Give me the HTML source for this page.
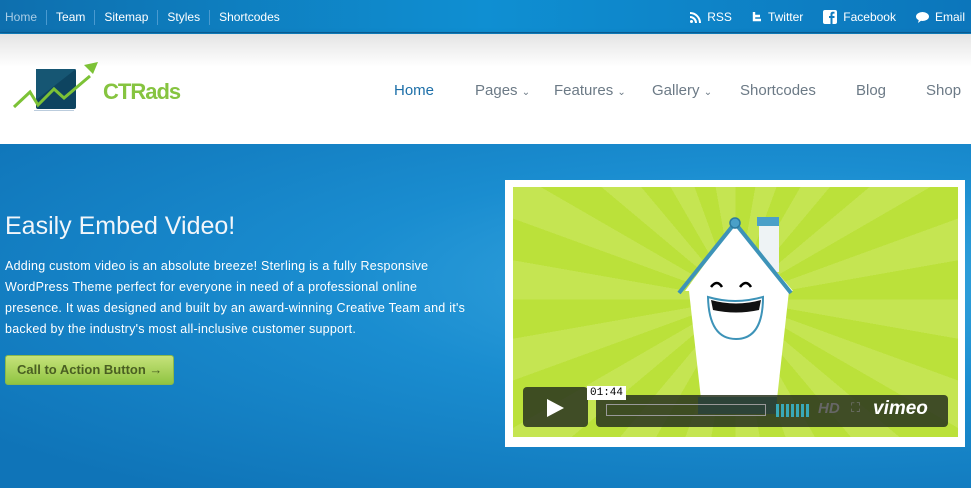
<!DOCTYPE html>
<html><head><meta charset="utf-8"><style>
*{margin:0;padding:0;box-sizing:border-box}
body{width:971px;height:488px;overflow:hidden;font-family:"Liberation Sans","DejaVu Sans",sans-serif;position:relative;background:#1185c7}
.top{position:absolute;left:0;top:0;width:971px;height:33px;background:linear-gradient(90deg,#0e6fae,#0f8fd2 50%,#0c76bb);border-bottom:1px solid #0a5f98}
.top .l{position:absolute;left:0;top:10px;font-size:12px;color:#fff;display:flex}
.top .l span{padding:0 9px;border-left:1px solid #4a9ad0;line-height:15px}
.top .l span:first-child{border:none;padding-left:5px;color:#a9cde6}
.top .r{position:absolute;right:6px;top:10px;font-size:12px;color:#fff;display:flex;gap:0}
.top .r span{margin-left:20px;display:flex;align-items:center;gap:6px}
.hdr{position:absolute;left:0;top:34px;width:971px;height:110px;background:linear-gradient(#e4e4e4,#fff 30%,#fff);box-shadow:0 2px 6px rgba(0,0,0,.4)}
.nav{position:absolute;top:82px;font-size:15px;color:#6c7a86}
.hero{position:absolute;left:0;top:144px;width:971px;height:344px;background:radial-gradient(ellipse at 80% 40%,#3aa8e0,#1a8dd0 40%,#0f74b8 90%)}
h1{position:absolute;left:5px;top:212px;font-weight:normal;font-size:25px;color:#f2f6fa}
.p{position:absolute;left:5px;top:256px;width:462px;font-size:12.5px;line-height:21px;color:#fff;letter-spacing:0.25px}
.btn{position:absolute;left:5px;top:355px;width:169px;height:30px;border-radius:3px;background:linear-gradient(#c6e27a,#8fc442);border:1px solid #8ab84a;font-weight:bold;font-size:13px;color:#4a5f22;line-height:28px;text-indent:11px}
.frame{position:absolute;left:505px;top:180px;width:460px;height:267px;background:#fff}
.vid{position:absolute;left:513px;top:187px;width:445px;height:250px;overflow:hidden;background:repeating-conic-gradient(from 0deg at 50% 45%,#bbe13a 0deg 10deg,#c5e552 10deg 20deg)}
</style></head><body>
<div class="top">
<div class="l"><span>Home</span><span>Team</span><span>Sitemap</span><span>Styles</span><span>Shortcodes</span></div>
<div class="r">
<span><svg width="11" height="11" viewBox="0 0 11 11"><circle cx="1.5" cy="9.5" r="1.5" fill="#fff"/><path d="M0 5a6 6 0 0 1 6 6M0 1a10 10 0 0 1 10 10" stroke="#fff" stroke-width="2" fill="none"/></svg>RSS</span>
<span><svg width="10" height="11" viewBox="0 0 10 11"><path d="M2 0v8h7M2 4h6" stroke="#fff" stroke-width="2.4" fill="none"/></svg>Twitter</span>
<span><svg width="14" height="14" viewBox="0 0 14 14"><rect width="14" height="14" rx="2" fill="#fff"/><path d="M9.5 14V8h2V6h-2V4.5c0-.6.3-.9 1-.9h1V1.8H9.8C8 1.8 7.5 3 7.5 4.2V6H6v2h1.5v6z" fill="#0f7cc0"/></svg>Facebook</span>
<span><svg width="13" height="11" viewBox="0 0 13 11"><ellipse cx="6.5" cy="4.5" rx="6.5" ry="4.5" fill="#fff"/><path d="M3 7l-1 4 4-3z" fill="#fff"/></svg>Email</span>
</div></div>
<div class="hdr">
<svg style="position:absolute;left:12px;top:26px" width="90" height="54" viewBox="0 0 90 54"><rect x="24" y="9" width="40" height="40" rx="2" fill="#0e4460"/><path d="M24 9h40L24 40z" fill="#165673"/><path d="M2 47l16-15 8 13 16-16 10 9 26-22" stroke="#7cc236" stroke-width="3" fill="none"/><path d="M86 2l-14 3 9 9z" fill="#7cc236"/><rect x="22" y="50" width="40" height="1" fill="#bcd"/></svg>
<div style="position:absolute;left:103px;top:45px;font-size:22px;font-weight:bold;color:#86c440;letter-spacing:-1px">CTRads</div>
<div class="nav" style="left:394px;top:48px;color:#1d6fa8">Home</div>
<div class="nav" style="left:475px;top:48px">Pages <small style="font-size:10px">⌄</small></div>
<div class="nav" style="left:554px;top:48px">Features <small style="font-size:10px">⌄</small></div>
<div class="nav" style="left:652px;top:48px">Gallery <small style="font-size:10px">⌄</small></div>
<div class="nav" style="left:740px;top:48px">Shortcodes</div>
<div class="nav" style="left:856px;top:48px">Blog</div>
<div class="nav" style="left:926px;top:48px">Shop</div>
</div>
<div class="hero"></div>
<h1>Easily Embed Video!</h1>
<div class="p">Adding custom video is an absolute breeze! Sterling is a fully Responsive WordPress Theme perfect for everyone in need of a professional online presence. It was designed and built by an award-winning Creative Team and it's backed by the industry's most all-inclusive customer support.</div>
<div class="btn">Call to Action Button →</div>
<div class="frame"></div>
<div class="vid">
<svg width="445" height="250" viewBox="0 0 445 250" style="position:absolute;left:0;top:0">
<rect x="246" y="30" width="20" height="55" fill="#eef3f5"/><rect x="244" y="30" width="22" height="9" fill="#4aa0c8"/>
<path d="M222 36L172 104l4 0 12 108h76l12-108h4z" fill="#fff"/>
<path d="M166 106L222 36l56 70" stroke="#3d93b8" stroke-width="4" fill="none"/>
<circle cx="222" cy="36" r="5" fill="#4aa0c8" stroke="#2b7aa0" stroke-width="1.5"/>
<rect x="185" y="210" width="79" height="17" fill="#4aa0c8"/>
<path d="M198 100q6-8 11 0M227 100q6-8 11 0" stroke="#000" stroke-width="2.5" fill="none"/>
<path d="M195 110q27 8 55 0q0 42-27 42t-28-42z" fill="#fff" stroke="#3d93b8" stroke-width="2"/>
<path d="M198 113q25 7 50 0l-2 10q-23 5-46 0z" fill="#111"/>
</svg>
<div style="position:absolute;left:10px;top:200px;width:65px;height:40px;background:rgba(40,50,30,.85);border-radius:4px"><div style="position:absolute;left:24px;top:12px;border-left:17px solid #fff;border-top:9px solid transparent;border-bottom:9px solid transparent"></div></div>
<div style="position:absolute;left:83px;top:208px;width:352px;height:32px;background:rgba(40,50,30,.85);border-radius:4px">
<div style="position:absolute;left:10px;top:9px;width:160px;height:12px;border:1px solid #999"></div>
<div style="position:absolute;left:180px;top:9px;width:33px;height:13px;background:repeating-linear-gradient(90deg,#39a9b8 0 3px,transparent 3px 5px)"></div>
<div style="position:absolute;left:222px;top:5px;font-weight:bold;font-style:italic;font-size:15px;color:#666">HD</div>
<div style="position:absolute;left:255px;top:5px;font-size:13px;color:#777">⛶</div>
<div style="position:absolute;left:277px;top:3px;font-weight:bold;font-style:italic;font-size:19px;color:#fff">vimeo</div>
</div>
<div style="position:absolute;left:74px;top:199px;background:#fff;font-family:'Liberation Mono',monospace;font-size:11px;padding:1px 3px;color:#000">01:44</div>
</div>
</body></html>
